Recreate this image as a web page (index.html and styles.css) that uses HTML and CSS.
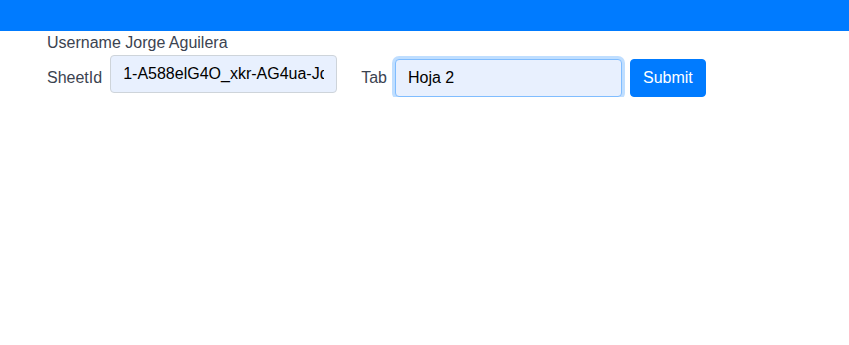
FILE: index.html
```html
<!DOCTYPE html>
<html lang="en">
<head>
    <meta charset="UTF-8">
    <meta name="viewport" content="width=device-width, initial-scale=1.0">
    <title>Sheets</title>
    <link rel="stylesheet" href="styles.css">
</head>
<body>
    <nav class="navbar"></nav>
    <div class="container">
        <div class="username">Username Jorge Aguilera</div>
        <form class="sheet-form" onsubmit="return false">
            <label class="label" for="sheetId">SheetId</label>
            <input class="form-control sheet-input" type="text" id="sheetId" value="1-A588elG4O_xkr-AG4ua-JdKx3pQ">
            <label class="label tab-label" for="tab">Tab</label>
            <input class="form-control focused" type="text" id="tab" value="Hoja 2">
            <button class="button" type="submit">Submit</button>
        </form>
    </div>
</body>
</html>
```

FILE: styles.css
```css
body {
    margin: 0;
    font-family: "Liberation Sans", Arial, sans-serif;
    font-size: 16px;
    line-height: 24px;
    color: #3b4350;
    background: #fff;
}
.navbar {
    height: 31px;
    background-color: #007bff;
}
.container {
    padding-left: 47px;
}
.username {
    height: 24px;
}
.sheet-form {
    display: flex;
    align-items: flex-end;
}
.label {
    margin-bottom: 7px;
    margin-right: 8px;
}
.tab-label {
    margin-left: 24px;
}
.form-control {
    box-sizing: border-box;
    width: 227px;
    height: 38px;
    padding: 6px 12px;
    font-family: inherit;
    font-size: 16px;
    color: #000;
    background-color: #e8f0fe;
    border: 1px solid #ced4da;
    border-radius: 4px;
    outline: none;
}
.sheet-input {
    margin-bottom: 4px;
}
.focused {
    border-color: #80bdff;
    box-shadow: 0 0 0 3px rgba(0, 123, 255, 0.25);
}
.button {
    margin-left: 8px;
    height: 38px;
    padding: 6px 12px;
    font-family: inherit;
    font-size: 16px;
    line-height: 24px;
    color: #fff;
    background-color: #007bff;
    border: 1px solid #007bff;
    border-radius: 4px;
    cursor: pointer;
}
```
